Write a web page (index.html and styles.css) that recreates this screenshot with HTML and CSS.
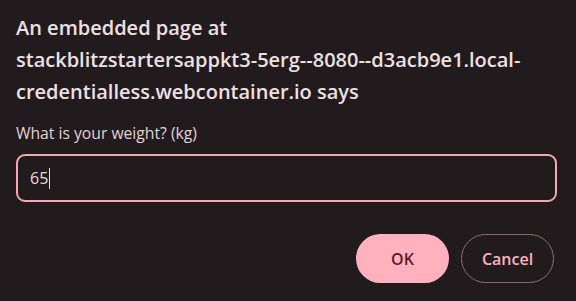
FILE: index.html
```html
<!DOCTYPE html>
<html lang="en">
<head>
    <meta charset="UTF-8">
    <meta name="viewport" content="width=device-width, initial-scale=1.0">
    <title>Prompt</title>
    <link rel="stylesheet" href="styles.css">
</head>
<body>
    <div class="dialog">
        <h1 class="dialog-title">An embedded page at<br>stackblitzstartersappkt3-5erg--8080--d3acb9e1.local-<br>credentialless.webcontainer.io says</h1>
        <p class="dialog-message">What is your weight? (kg)</p>
        <div class="prompt-input">65<span class="caret"></span></div>
        <div class="dialog-buttons">
            <button class="btn btn-ok">OK</button>
            <button class="btn btn-cancel">Cancel</button>
        </div>
    </div>
</body>
</html>
```

FILE: styles.css
```css
body {
    margin: 0;
    background-color: #221b1d;
    font-family: "Open Sans", "Noto Sans", sans-serif;
    color: #ede0e2;
}
.dialog {
    padding: 12px 19px 0 16px;
}
.dialog-title {
    margin: 0;
    font-size: 20px;
    font-weight: 600;
    line-height: 32px;
    white-space: nowrap;
}
.dialog-message {
    margin: 14px 0 0;
    font-size: 15.7px;
    line-height: 22px;
    color: #e2d2d4;
}
.prompt-input {
    margin-top: 10px;
    height: 48px;
    box-sizing: border-box;
    border: 2px solid #f4a7b6;
    border-radius: 9px;
    padding: 0 12px;
    display: flex;
    align-items: center;
    font-size: 16px;
    color: #e8dcde;
}
.caret {
    display: inline-block;
    width: 1px;
    height: 21px;
    margin-left: 1px;
    background-color: #e8dcde;
}
.dialog-buttons {
    display: flex;
    justify-content: flex-end;
    gap: 12px;
    margin: 32px 3px 0 0;
}
.btn {
    width: 93px;
    height: 49px;
    border-radius: 25px;
    font-family: inherit;
    font-size: 16px;
    font-weight: 600;
    cursor: pointer;
}
.btn-ok {
    background-color: #ffb1bd;
    color: #5c1b2d;
    border: none;
}
.btn-cancel {
    background-color: transparent;
    color: #ffb1bd;
    border: 1px solid #8c6c72;
}
```
